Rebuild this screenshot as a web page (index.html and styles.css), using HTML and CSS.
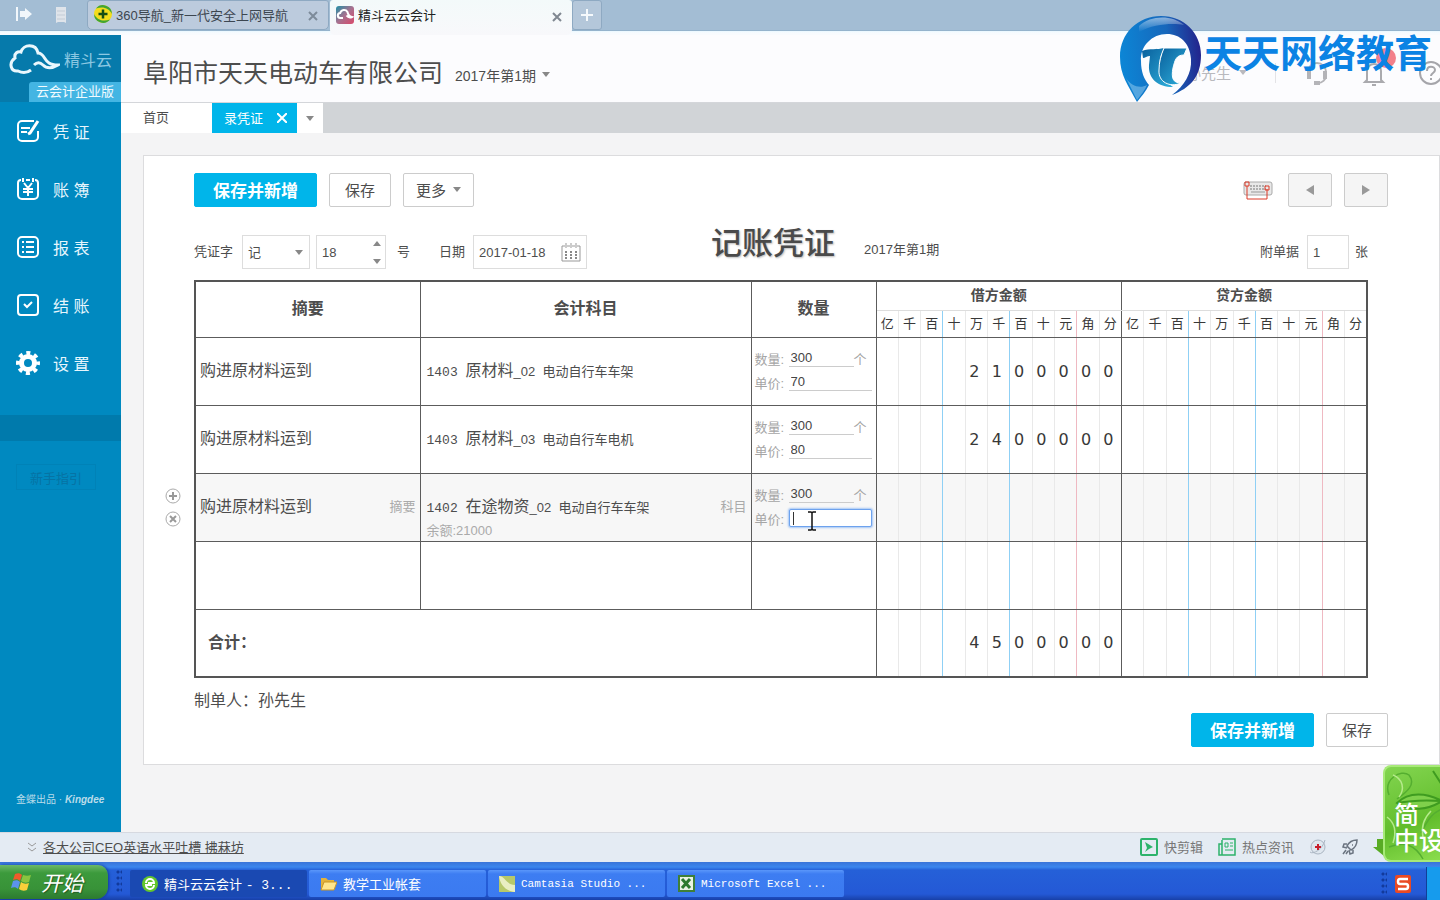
FILE: index.html
```html
<!DOCTYPE html>
<html lang="zh-CN">
<head>
<meta charset="utf-8">
<title>精斗云云会计</title>
<link rel="stylesheet" href="styles.css">
</head>
<body>
<div class="screen">

  <nav class="browser-tabs">
    <div class="browser-tools">
      <svg width="16" height="14" viewBox="0 0 16 14"><path d="M1 0v14" stroke="#f2f7fb" stroke-width="2"/><path d="M4 4h5V1l7 6-7 6v-3H4z" fill="#f2f7fb"/></svg>
      <svg width="10" height="16" viewBox="0 0 10 16"><path d="M0 0h10v16l-2-1H2l-2 1z" fill="#dfe4ea"/><path d="M1 4h8M1 8h8M1 12h8" stroke="#c3ccd6"/></svg>
    </div>
    <div class="browser-tab">
      <svg width="18" height="18" viewBox="0 0 18 18"><circle cx="9" cy="9" r="9" fill="#f4dc1c"/><path d="M2 3.500A9 9 0 0 1 18 9c-3-6-9-8-16-5.500zM0 9c3 6 9 8 16 5.500A9 9 0 0 1 0 9z" fill="#3fa535"/><path d="M9 4.500v9M4.500 9h9" stroke="#174d14" stroke-width="2.500"/></svg>
      <span class="grow">360导航_新一代安全上网导航</span>
      <svg width="10" height="10" viewBox="0 0 10 10"><path d="M1 1l8 8M9 1l-8 8" stroke="#7d8b9a" stroke-width="2"/></svg>
    </div>
    <div class="browser-tab current">
      <svg width="18" height="18" viewBox="0 0 18 18"><defs><linearGradient id="fav" x1="0" y1="0" x2="1" y2="1"><stop offset="0" stop-color="#1f90a6"/><stop offset=".5" stop-color="#a8718f"/><stop offset="1" stop-color="#d9486a"/></linearGradient></defs><rect width="18" height="18" rx="3" fill="url(#fav)"/><path d="M7 12H4.500a2.500 2.500 0 0 1-.3-5A4 4 0 0 1 11.500 6c.5 3 2 4.500 4.500 5-2 1-4 .5-5.500-1.500" fill="none" stroke="#fff" stroke-width="2"/></svg>
      <span class="grow">精斗云云会计</span>
      <svg width="10" height="10" viewBox="0 0 10 10"><path d="M1 1l8 8M9 1l-8 8" stroke="#808891" stroke-width="2"/></svg>
    </div>
    <button class="new-tab" aria-label="新标签"><svg width="12" height="12" viewBox="0 0 12 12"><path d="M6 0v12M0 6h12" stroke="#f5f9fc" stroke-width="2"/></svg></button>
  </nav>

  <div class="app">
    <aside class="sidebar">
      <div class="brand">
        <div class="brand-line">
          <svg width="52" height="32" viewBox="0 0 52 32"><path d="M23 27c-4 3-9 3-13 1-7 1-10-8-3-13-1-5 3-7 6-6 2-8 15-9 17 1 6 0 6 7 11 10 3 2 6 2 9 2-5 3-11 4-15 0-3-3-6-3-9 0" fill="none" stroke="#e9f7fd" stroke-width="3"/></svg>
          <span>精斗云</span>
        </div>
        <span class="edition">云会计企业版</span>
      </div>
      <ul class="menu">
        <li><a href="#"><svg width="24" height="24" viewBox="0 0 24 24"><path d="M18 2H6a4 4 0 0 0-4 4v12a4 4 0 0 0 4 4h12a4 4 0 0 0 4-4v-6M5 9h9M5 13h6" /><path d="M22 2l-8 12-2 1" stroke-width="3"/></svg>凭 证</a></li>
        <li><a href="#"><svg width="24" height="24" viewBox="0 0 24 24"><path d="M5 3a3 3 0 0 0-3 3v12a4 4 0 0 0 4 4h12a4 4 0 0 0 4-4V6a3 3 0 0 0-3-3M10 3h4M7 1v4M17 1v4M8 6l4 5 4-5M12 11v8M7 12h10M7 15h10"/></svg>账 簿</a></li>
        <li><a href="#"><svg width="24" height="24" viewBox="0 0 24 24"><rect x="2" y="2" width="20" height="20" rx="4"/><path d="M6 7h2M10 7h8M6 12h2M10 12h8M6 17h2M10 17h8"/></svg>报 表</a></li>
        <li><a href="#"><svg width="24" height="24" viewBox="0 0 24 24"><rect x="2" y="2" width="20" height="20" rx="3"/><path d="M8 11l3 3 5-5"/></svg>结 账</a></li>
        <li><a href="#"><svg width="24" height="24" viewBox="0 0 24 24"><circle cx="12" cy="12" r="6.500" stroke-width="5"/><circle cx="12" cy="12" r="10" stroke-width="4" stroke-dasharray="4 3.854" stroke-dashoffset="2"/><circle cx="12" cy="12" r="2" fill="#0089c0" stroke="none"/></svg>设 置</a></li>
      </ul>
      <div class="band"></div>
      <button class="guide">新手指引</button>
      <p class="maker">金蝶出品 · <em>Kingdee</em></p>
    </aside>

    <div class="page">
      <header class="company">
        <h1>阜阳市天天电动车有限公司</h1>
        <button class="period">2017年第1期 <i class="caret"></i></button>
        <div class="account">
          <span>孙先生</span><i class="caret pale"></i><i class="rule"></i>
          <svg width="26" height="26" viewBox="0 0 26 26"><path d="M4 15V12a9 9 0 0 1 18 0v3c0 5-4 8-8 8" fill="none" stroke="#b4b4b8" stroke-width="2"/><path d="M3 11h4v8H3zM19 11h4v8h-4zM10 21h6v4h-6z" fill="#b4b4b8"/></svg>
          <svg width="24" height="26" viewBox="0 0 24 26"><path d="M5 20V11a7 7 0 0 1 14 0v9l2 2H3zM10 25h4" fill="none" stroke="#aaaaae" stroke-width="2"/></svg>
          <svg width="22" height="26" viewBox="0 0 22 26"><circle cx="13" cy="13" r="11" fill="none" stroke="#a5a5aa" stroke-width="2"/><path d="M9 11c0-6 8-5 8-1 0 3-4 3-4 6M13 18v2" fill="none" stroke="#a5a5aa" stroke-width="2"/></svg>
        </div>
      </header>

      <nav class="work-tabs">
        <a href="#" class="home">首页</a>
        <a href="#" class="open">录凭证 <svg width="10" height="10" viewBox="0 0 10 10"><path d="M0 0l10 10M10 0L0 10" stroke="#fff" stroke-width="2"/></svg></a>
        <button class="more-tabs" aria-label="更多标签"><i class="caret"></i></button>
      </nav>

      <main class="card">
        <div class="toolbar">
          <button class="btn primary">保存并新增</button>
          <button class="btn">保存</button>
          <button class="btn">更多 <i class="caret"></i></button>
          <div class="pager">
            <svg width="30" height="20" viewBox="0 0 30 20"><rect x="1" y="2" width="28" height="13" rx="2" fill="#e8e8e8" stroke="#aaa"/><path d="M7 6h16M7 9h16" stroke="#777" stroke-dasharray="2 1"/><path d="M8 12h14" stroke="#999"/><path d="M4 6v13h20V9M2 2h4v4H2zM22 6h4v4h-4z" fill="none" stroke="#dc3b28"/></svg>
            <button class="btn turn" aria-label="上一张"><i class="arrow left"></i></button>
            <button class="btn turn" aria-label="下一张"><i class="arrow right"></i></button>
          </div>
        </div>

        <section class="voucher">
          <div class="voucher-head">
            <label for="word">凭证字</label>
            <span class="field word"><select id="word"><option>记</option></select><i class="caret"></i></span>
            <span class="field number"><input id="num" type="text" value="18"><span class="spin"><i class="caret up"></i><i class="caret"></i></span></span>
            <label for="num" class="unit">号</label>
            <label for="date">日期</label>
            <span class="field date"><input id="date" type="text" value="2017-01-18"><svg width="20" height="20" viewBox="0 0 20 20"><path d="M1 4v15h18V4M1 4h3M6 4h3M11 4h3M16 4h3M5 1v5M10 1v5M15 1v5" fill="none" stroke="#999"/><path d="M4 10h12M4 13h12M4 16h12" stroke="#888" stroke-width="2" stroke-dasharray="2 3"/></svg></span>
            <h2>记账凭证</h2>
            <span class="voucher-period">2017年第1期</span>
            <label for="att" class="attach">附单据</label>
            <span class="field count"><input id="att" type="text" value="1"></span>
            <label for="att">张</label>
          </div>

          <table class="ledger">
            <colgroup><col class="c-note"><col class="c-subject"><col class="c-qty"><col span="22"></colgroup>
            <thead>
              <tr class="titles"><th rowspan="2">摘要</th><th rowspan="2">会计科目</th><th rowspan="2">数量</th><th colspan="11" class="side">借方金额</th><th colspan="11" class="side">贷方金额</th></tr>
              <tr class="digits units"><th>亿</th><th>千</th><th>百</th><th>十</th><th>万</th><th>千</th><th>百</th><th>十</th><th>元</th><th>角</th><th>分</th><th>亿</th><th>千</th><th>百</th><th>十</th><th>万</th><th>千</th><th>百</th><th>十</th><th>元</th><th>角</th><th>分</th></tr>
            </thead>
            <tbody>
              <tr class="digits">
                <td class="note">购进原材料运到</td>
                <td class="subject"><code>1403 </code><b>原材料</b>_02&nbsp; 电动自行车车架</td>
                <td class="qty"><div><label for="q1">数量:</label><input id="q1" class="short" value="300"><span>个</span></div><div><label for="p1">单价:</label><input id="p1" value="70"></div></td>
                <td></td><td></td><td></td><td></td><td>2</td><td>1</td><td>0</td><td>0</td><td>0</td><td>0</td><td>0</td>
                <td></td><td></td><td></td><td></td><td></td><td></td><td></td><td></td><td></td><td></td><td></td>
              </tr>
              <tr class="digits">
                <td class="note">购进原材料运到</td>
                <td class="subject"><code>1403 </code><b>原材料</b>_03&nbsp; 电动自行车电机</td>
                <td class="qty"><div><label for="q2">数量:</label><input id="q2" class="short" value="300"><span>个</span></div><div><label for="p2">单价:</label><input id="p2" value="80"></div></td>
                <td></td><td></td><td></td><td></td><td>2</td><td>4</td><td>0</td><td>0</td><td>0</td><td>0</td><td>0</td>
                <td></td><td></td><td></td><td></td><td></td><td></td><td></td><td></td><td></td><td></td><td></td>
              </tr>
              <tr class="digits active">
                <td class="note">
                  <div class="row-tools">
                    <button aria-label="增加分录"><svg width="16" height="16" viewBox="0 0 16 16"><circle cx="8" cy="8" r="7" fill="none" stroke="#aaa"/><path d="M8 4v8M4 8h8" stroke="#999" stroke-width="2"/></svg></button>
                    <button aria-label="删除分录"><svg width="16" height="16" viewBox="0 0 16 16"><circle cx="8" cy="8" r="7" fill="none" stroke="#aaa"/><path d="M5 5l6 6M11 5l-6 6" stroke="#999" stroke-width="2"/></svg></button>
                  </div>
                  <div class="pick"><span>购进原材料运到</span><a href="#">摘要</a></div>
                </td>
                <td class="subject"><div class="pick"><span><code>1402 </code><b>在途物资</b>_02&nbsp; 电动自行车车架</span><a href="#">科目</a></div><small>余额:21000</small></td>
                <td class="qty"><div><label for="q3">数量:</label><input id="q3" class="short" value="300"><span>个</span></div><div class="editing"><label for="p3">单价:</label><input id="p3" class="focused" value=""><i class="text-caret"></i><svg class="pointer" width="10" height="20" viewBox="0 0 10 20"><path d="M1 1h3l1 1 1-1h3M5 2v16M1 19h3l1-1 1 1h3" fill="none" stroke="#111" stroke-width="1.500"/></svg></div></td>
                <td></td><td></td><td></td><td></td><td></td><td></td><td></td><td></td><td></td><td></td><td></td>
                <td></td><td></td><td></td><td></td><td></td><td></td><td></td><td></td><td></td><td></td><td></td>
              </tr>
              <tr class="digits">
                <td></td><td></td><td></td>
                <td></td><td></td><td></td><td></td><td></td><td></td><td></td><td></td><td></td><td></td><td></td>
                <td></td><td></td><td></td><td></td><td></td><td></td><td></td><td></td><td></td><td></td><td></td>
              </tr>
            </tbody>
            <tfoot>
              <tr class="digits">
                <th colspan="3">合计：</th>
                <td></td><td></td><td></td><td></td><td>4</td><td>5</td><td>0</td><td>0</td><td>0</td><td>0</td><td>0</td>
                <td></td><td></td><td></td><td></td><td></td><td></td><td></td><td></td><td></td><td></td><td></td>
              </tr>
            </tfoot>
          </table>
          <p class="author">制单人：孙先生</p>
        </section>

        <div class="bottom-actions">
          <button class="btn primary">保存并新增</button>
          <button class="btn">保存</button>
        </div>
      </main>
    </div>
  </div>

  <footer class="status">
    <svg width="8" height="10" viewBox="0 0 8 10"><path d="M0 1l4 3 4-3M0 6l4 3 4-3" fill="none" stroke="#999"/></svg>
    <a href="#">各大公司CEO英语水平吐槽 拂菻坊</a>
    <div class="status-tools">
      <span><svg width="18" height="18" viewBox="0 0 18 18"><rect x="1" y="1" width="16" height="16" rx="1" fill="none" stroke="#2db36b" stroke-width="2"/><path d="M5 4l8 5-4 2-4 3 2-4z" fill="#2db36b"/></svg>快剪辑</span>
      <span><svg width="18" height="18" viewBox="0 0 18 18"><path d="M4 1h13v16H1V6h3M4 2v15" fill="none" stroke="#2db36b" stroke-width="1.500"/><path d="M7 5h3v4H7zM12 5h3M12 8h3M7 12h8" fill="none" stroke="#2db36b"/></svg>热点资讯</span>
      <svg width="18" height="18" viewBox="0 0 18 18"><circle cx="9" cy="9" r="7" fill="#dfe7ef" stroke="#aab5c2"/><path d="M1 14c3 3 13-3 15-12" fill="none" stroke="#aab5c2"/><path d="M9 6v6M6 9h6" stroke="#c81f2c" stroke-width="2"/></svg>
      <svg width="16" height="16" viewBox="0 0 16 16"><path d="M15 1c-5 0-8 2-10 6l4 4c4-2 6-5 6-10zM5 5H2L1 8l4 1M11 11v3l-3 1-1-4M4 11l-3 4M10 6h1M6 12l-2 3" fill="none" stroke="#6b7480" stroke-width="1.500"/></svg>
      <svg width="11" height="18" viewBox="0 0 11 18"><path d="M4 1h7v17L0 9h4z" fill="#58ab24"/></svg>
    </div>
  </footer>

  <footer class="taskbar">
    <button class="start">
      <svg width="22" height="20" viewBox="0 0 22 20"><path d="M4 2c3-1 5-1 7 1L9 9c-2-2-4-2-7-1z" fill="#ef5a2b"/><path d="M12 3c3 1 5 1 8 0l-2 7c-3 1-5 1-8-1z" fill="#8ac43f"/><path d="M2 9c3-1 5-1 7 1l-2 7c-2-2-4-2-7-1z" fill="#5c93ec"/><path d="M10 10c3 2 5 2 8 1l-2 7c-3 1-5 1-8-1z" fill="#f9cf3a"/></svg>
      开始
    </button>
    <i class="grip"></i>
    <div class="tasks">
      <button class="task pressed"><svg width="16" height="16" viewBox="0 0 16 16"><circle cx="8" cy="8" r="8" fill="#63c62c"/><path d="M4 7a4 4 0 0 1 8 0H6M12 9a4 4 0 0 1-8 0h6" fill="none" stroke="#fff" stroke-width="2"/></svg><span>精斗云云会计 <code>- 3...</code></span></button>
      <button class="task"><svg width="17" height="14" viewBox="0 0 17 14"><path d="M1 1h5l2 2h6v10H1z" fill="#e3b23b"/><path d="M4 5h13l-3 8H1z" fill="#ffe58d" stroke="#c99527"/></svg>教学工业帐套</button>
      <button class="task latin"><svg width="16" height="16" viewBox="0 0 16 16"><rect width="16" height="16" fill="#b7c86a"/><path d="M0 0c6 0 6 8 16 9v7C6 15 1 8 0 0z" fill="#e9eec2"/></svg>Camtasia Studio ...</button>
      <button class="task latin"><svg width="17" height="17" viewBox="0 0 17 17"><rect x="1" y="1" width="15" height="15" fill="#e9f3e4" stroke="#3f7f38" stroke-width="2"/><path d="M4 4l8 9M12 4l-8 9" stroke="#2c7a2e" stroke-width="3"/></svg>Microsoft Excel ...</button>
    </div>
    <div class="tray">
      <i class="grip"></i>
      <svg width="16" height="18" viewBox="0 0 16 18"><rect width="16" height="18" rx="2" fill="#ea4a24"/><path d="M13 4H5Q3 4 3 6.500T5 9h6q2 0 2 2.500T11 14H3" fill="none" stroke="#fff" stroke-width="2.500"/></svg>
      <i class="notify"></i>
    </div>
  </footer>

  <div class="watermark">
    <svg width="82" height="88" viewBox="0 0 82 88"><defs><linearGradient id="ring" x1="0" y1=".5" x2="1" y2=".4"><stop offset="0" stop-color="#0c86d6"/><stop offset=".6" stop-color="#1767bb"/><stop offset="1" stop-color="#23238c"/></linearGradient><linearGradient id="shine" x1="0" y1="0" x2="0" y2="1"><stop offset="0" stop-color="#fff" stop-opacity=".5"/><stop offset="1" stop-color="#fff" stop-opacity="0"/></linearGradient><linearGradient id="letter" x1="0" y1="0" x2="1" y2="1"><stop offset="0" stop-color="#095f9c"/><stop offset="1" stop-color="#2fb0dc"/></linearGradient></defs>
      <circle cx="47" cy="44" r="27" fill="#fdfdff"/>
      <path d="M17 87C8 70 0 60 0 42 0 18 18 1 41 1s40 17 40 39-11 33-29 40c12-9 20-21 19-36C70 28 60 19 47 19c-15 0-27 12-26 27 0 11 3 18 8 24-3 6-8 12-12 17z" fill="url(#ring)"/>
      <path d="M19 11C31 0 52 0 64 10 52 8 34 9 19 17z" fill="url(#shine)"/>
      <path d="M6 63c5 8 14 11 21 7-2 5-6 10-10 15z" fill="#a9d8f4" opacity=".45"/>
      <path d="M22 36c8-3 15-1 22-3l-3 7c-3 9-2 22 12 32-15 0-25-8-24-22l1-9c-3 0-5 2-7 2z" fill="url(#letter)"/>
      <path d="M44 33h23l-3 7c-8 0-9 5-11 13-2 10 0 15 8 15-11 5-23-1-22-13 0-8 2-15 5-22z" fill="url(#letter)" stroke="#fff"/></svg>
    <strong>天天网络教育</strong>
    <i class="alert"></i>
  </div>

  <div class="ime">
    <svg width="57" height="96" viewBox="0 0 57 96"><path d="M12 36c12-12 30-10 45-2-14 9-32 11-45 2zM12 36c16-3 30-3 45-2M48 4l9 14" fill="#7fd04b" stroke="#3f9c20" stroke-width="2"/><path d="M4 28C-2 12 16 2 24 8c8 10-4 18-12 24M36 66c8-16 12-20 21-24M4 80c16-6 26-2 34 12" fill="none" stroke="#55ae30" stroke-width="1.500"/><path d="M8 8c10 4 12 14 6 22M46 44c-8 8-10 16-8 26M2 50c8 6 10 14 6 26" fill="none" stroke="#b5ea8a" stroke-width="1.500"/></svg>
    <span>简<br>中设</span>
  </div>
</div>
</body>
</html>
```
FILE: styles.css
```css
* { box-sizing: border-box; }
body {
  margin: 0;
  overflow: hidden;
  font-family: "Liberation Sans", "Noto Sans CJK SC", sans-serif;
  font-size: 13px;
  color: #4d4d4d;
}
h1, h2, p, ul { margin: 0; padding: 0; font-weight: 400; }
ul { list-style: none; }
a { color: inherit; text-decoration: none; }
button, input, select { font: inherit; color: inherit; }
button { padding: 0; border: 0; background: none; }
svg { flex: none; display: block; }
code { font-family: "Liberation Mono", monospace; font-size: 13px; white-space: pre; }

.screen {
  position: relative;
  display: flex;
  flex-direction: column;
  min-height: 100vh;
  overflow: hidden;
}

.caret {
  display: inline-block;
  border: 4px solid transparent;
  border-top: 5px solid #888;
  border-bottom: 0;
}
.caret.up { border-top: 0; border-bottom: 5px solid #888; }
.caret.pale { border-top-color: #b9b9bd; }

/* browser tabs */
.browser-tabs {
  display: flex;
  height: 35px;
  background: linear-gradient(#a3bdd4 30px, #86a9c4 31px, #eaf8ff 31px, #f8fbfe 33px);
}
.browser-tools { display: flex; gap: 24px; width: 87px; padding: 7px 0 0 16px; }
.browser-tab {
  display: flex;
  align-items: center;
  gap: 4px;
  width: 242px;
  height: 30px;
  padding: 0 10px 2px 6px;
  border: 1px solid #8ea9c2;
  border-radius: 3px 3px 5px 5px;
  background: #bccbdd;
  color: #3c4650;
}
.browser-tab.current {
  height: 35px;
  border: 0;
  padding-bottom: 6px;
  margin-left: 1px;
  background: linear-gradient(#f3fafa, #f8f8fb);
  color: #222;
}
.browser-tab svg:last-child { margin-top: 4px; }
.grow { flex: 1; white-space: nowrap; }
.new-tab {
  display: grid;
  place-items: center;
  width: 30px;
  height: 30px;
  border: 1px solid #8ea9c2;
  border-radius: 3px;
  background: #b4c7da;
}

/* application frame */
.app { display: flex; flex: 1; background: #f4f4f5; }
.sidebar {
  display: flex;
  flex-direction: column;
  width: 121px;
  background: #0089c0;
  color: #e6f6fd;
}
.brand {
  display: flex;
  flex-direction: column;
  justify-content: space-between;
  height: 67px;
  background: #067aab;
}
.brand-line { display: flex; align-items: center; gap: 4px; padding: 8px 0 0 8px; color: #8cc8e2; font-size: 16px; white-space: nowrap; }
.edition {
  align-self: flex-end;
  width: 92px;
  height: 20px;
  border-radius: 3px 0 0 0;
  background: #43b5e3;
  color: #f2fbff;
  line-height: 20px;
  text-align: center;
}
.menu a { display: flex; align-items: center; gap: 13px; height: 58px; padding-left: 16px; font-size: 16px; }
.menu svg { fill: none; stroke: #fff; stroke-width: 2; }
.band { height: 26px; margin-top: 23px; background: #007aac; }
.guide {
  width: 80px;
  height: 26px;
  margin: 23px 0 0 16px;
  border: 1px solid #0082b7;
  color: #0673a4;
}
.maker { margin: auto 0 26px 16px; color: #b9dcea; font-size: 10px; white-space: nowrap; }
.maker em { font-weight: 700; }

.page { display: flex; flex-direction: column; flex: 1; min-width: 0; }
.company { display: flex; align-items: center; height: 67px; padding: 8px 0 0 22px; background: #fcfcfe; }
.company h1 { font-size: 25px; line-height: 36px; }
.period { display: flex; align-items: center; gap: 6px; margin: 4px 0 0 12px; font-size: 14px; }
.account { display: flex; align-items: center; margin-left: auto; color: #b9b9bd; font-size: 15px; }
.account .caret { margin-left: 8px; }
.account .rule { height: 20px; margin: 0 28px; border-left: 1px solid #e3e3e6; }
.account svg { margin-right: 32px; }
.account svg:last-child { margin-right: 0; }

.work-tabs { display: flex; height: 31px; border-top: 1px solid #d4d6da; background: #d1d4d7; line-height: 29px; }
.home { width: 91px; padding-left: 22px; background: #fff; }
.open { display: flex; align-items: center; gap: 14px; padding: 0 10px 0 12px; background: #00b5ea; color: #fff; }
.more-tabs { display: grid; place-items: center; width: 26px; background: #fff; }

/* voucher card */
.card {
  margin: 22px 0 0 22px;
  padding: 17px 51px 17px 50px;
  border: 1px solid #dcdcde;
  background: #fff;
}
.toolbar, .bottom-actions { display: flex; gap: 12px; }
.btn {
  display: flex;
  align-items: center;
  justify-content: center;
  gap: 7px;
  min-width: 62px;
  height: 34px;
  padding: 0 12px 2px;
  border: 1px solid #ccc;
  border-radius: 2px;
  background: #fff;
  font-size: 15px;
}
.btn.primary { padding: 0 18px 2px; border-color: #00b5ea; background: #00b5ea; color: #fff; font-size: 17px; font-weight: 700; }
.pager { display: flex; align-items: center; gap: 12px; margin-left: auto; }
.pager svg { margin-right: 3px; }
.btn.turn { width: 44px; min-width: 44px; padding: 0; background: #f5f5f5; }
.arrow { border: 5px solid transparent; }
.arrow.left { border-right: 8px solid #999; border-left: 0; }
.arrow.right { border-left: 8px solid #999; border-right: 0; }

.voucher { margin-right: 20px; }
.voucher-head { display: flex; align-items: center; height: 34px; margin: 28px 0 11px; white-space: nowrap; }
.voucher-head label { padding-bottom: 4px; }
.field { position: relative; display: flex; align-items: center; height: 34px; border: 1px solid #ddd; background: #fff; }
.field input, .field select { width: 100%; height: 100%; padding: 0 5px; border: 0; background: none; outline: 0; appearance: none; }
.field .caret { flex: none; }
.word { width: 68px; margin: 0 6px 0 9px; padding-right: 6px; }
.number { width: 70px; padding-right: 4px; }
.spin { display: flex; flex-direction: column; gap: 13px; }
.unit { margin: 0 29px 0 11px; }
.date { width: 114px; margin-left: 8px; padding-right: 5px; }
.date input { padding-right: 0; }
.voucher-head h2 { margin: 0 29px 16px 124px; color: #4a4a4a; font-size: 31px; font-weight: 500; line-height: 34px; text-shadow: 1px 1px 2px #bbb; }
.voucher-period { padding-bottom: 8px; }
.attach { margin: 0 8px 0 auto; }
.count { width: 42px; margin-right: 6px; }

.ledger { width: 100%; table-layout: fixed; border-collapse: collapse; border: 2px solid #555; }
.c-note { width: 225px; }
.c-subject { width: 331px; }
.c-qty { width: 125px; }
.ledger th, .ledger td { padding: 0; border: 1px solid #5c5c5c; }
.ledger th { padding-bottom: 4px; font-size: 16px; }
.titles { height: 29px; }
.ledger .side { border-bottom-color: #ddd; font-size: 14px; }
.digits { height: 68px; }
.digits.units { height: 27px; }

/* amount grid: every rule is drawn by the right edge of its column */
.ledger .digits > :nth-last-child(-n+22) {
  padding-right: 4px;
  border-left: 0;
  border-right-color: #e9e9e9;
  color: #383838;
  font-family: "DejaVu Sans", sans-serif;
  font-size: 16px;
  text-align: center;
}
.ledger .digits.units > th:nth-last-child(-n+22) {
  padding: 0 0 2px;
  border-top-color: #ddd;
  font-family: "Noto Sans CJK SC", sans-serif;
  font-size: 13px;
  font-weight: 400;
  line-height: 20px;
}
.ledger tr.digits > :nth-last-child(9), .ledger tr.digits > :nth-last-child(20),
.ledger tr.digits > :nth-last-child(6), .ledger tr.digits > :nth-last-child(17) { border-right-color: #8fd0f5; }
.ledger tr.digits > :nth-last-child(3), .ledger tr.digits > :nth-last-child(14) { border-right-color: #efb9c2; }
.ledger tr.digits > :nth-last-child(12) { border-right-color: #5c5c5c; }
.ledger tr.digits > :nth-last-child(1) { border-right: 2px solid #555; }

.active { background: #f7f7f7; }
.ledger .note { position: relative; padding: 0 4px 4px; font-size: 16px; }
.ledger .subject { position: relative; padding: 0 4px 4px 6px; white-space: nowrap; }
.subject b { font-size: 16px; font-weight: 400; }
.subject small { position: absolute; left: 6px; bottom: 2px; color: #aaa; font-size: 13px; }
.pick { display: flex; align-items: center; justify-content: space-between; }
.pick a { color: #aaa; font-size: 13px; }
.row-tools { position: absolute; left: -31px; top: 14px; display: grid; gap: 7px; }
.ledger .qty { padding: 0 3px 2px; color: #a5a5a5; }
.qty div { position: relative; display: flex; align-items: center; height: 24px; }
.qty label { width: 34px; white-space: nowrap; }
.qty input { width: 83px; height: 18px; padding: 0 2px; border: 0; border-bottom: 1px solid #ccc; background: none; color: #444; outline: 0; }
.qty input.short { width: 65px; }
.qty input.focused { border: 1px solid #6da2ee; border-radius: 2px; background: #fff; box-shadow: 0 0 2px 1px #a5c6f5; }
.text-caret { position: absolute; left: 38px; top: 6px; height: 13px; border-left: 1px solid #333; }
.pointer { position: absolute; left: 52px; top: 5px; }
.ledger tfoot th { padding-left: 12px; text-align: left; }
.author { margin-top: 11px; font-size: 16px; line-height: 24px; }
.bottom-actions { justify-content: flex-end; }

/* browser status bar */
.status {
  display: flex;
  align-items: center;
  height: 30px;
  padding: 0 0 2px 28px;
  border-top: 1px solid #d6d9e0;
  background: #e4ebf3;
}
.status > a { margin-left: 7px; text-decoration: underline; }
.status-tools { display: flex; align-items: center; gap: 15px; margin: 0 56px 0 auto; color: #777; white-space: nowrap; }
.status-tools span { display: flex; align-items: center; gap: 6px; }

/* desktop taskbar */
.taskbar {
  display: flex;
  height: 38px;
  background: linear-gradient(#3a74d8, #3b86ee 5px, #2560d8 8px, #2459d6 32px, #1840a8);
  color: #fff;
}
.start {
  display: flex;
  align-items: center;
  gap: 8px;
  width: 108px;
  height: 34px;
  margin-top: 3px;
  padding-left: 11px;
  border-radius: 0 10px 12px 0;
  background: linear-gradient(#6cb868, #3c9a3c 8px, #389238 24px, #2c7a30);
  box-shadow: 1px 0 3px #123c9a;
  font-size: 21px;
  font-style: italic;
  text-shadow: 1px 1px 1px #235a24;
}
.grip { width: 6px; height: 24px; margin: 8px 8px 0; background: radial-gradient(circle at 2px 2px, #123a9c 1px, transparent 2px) 0 0 / 4px 6px; }
.tasks { display: flex; gap: 2px; margin-top: 8px; }
.task {
  display: flex;
  align-items: center;
  gap: 6px;
  width: 177px;
  height: 27px;
  padding-left: 11px;
  border-radius: 2px;
  background: linear-gradient(#5a97fa, #3d7df2 4px, #3b7af0);
  white-space: nowrap;
}
.task.pressed { padding-left: 12px; background: #1a49b2; }
.task.latin { font-family: "Liberation Mono", monospace; font-size: 11px; }
.tray { display: flex; align-items: center; margin-left: auto; }
.tray svg { margin-top: 6px; }
.tray .grip { margin-top: 6px; }
.notify { width: 14px; height: 33px; margin: 5px 0 0 15px; border-left: 1px solid #113f98; background: #169bed; }

/* overlays */
.watermark { position: absolute; z-index: 1; top: 15px; right: 8px; display: flex; }
.watermark strong { margin-left: 2px; color: #0b83e4; font-family: "Noto Sans CJK SC", sans-serif; font-size: 38px; line-height: 72px; white-space: nowrap; }
.alert { position: absolute; z-index: -1; top: 33px; right: 36px; width: 20px; height: 20px; border-radius: 50%; background: #f04b59; opacity: .7; }
.ime {
  position: absolute;
  z-index: 1;
  right: 0;
  bottom: 38px;
  width: 57px;
  height: 97px;
  overflow: hidden;
  border: 2px solid #a7ea78;
  border-right: 0;
  border-radius: 8px 0 0 8px;
  background: linear-gradient(160deg, #83d550, #62bd2c 60%, #8bdd4e);
}
.ime span { position: absolute; left: 9px; top: 35px; color: #fff; font-size: 25px; font-weight: 500; line-height: 26px; white-space: nowrap; }
```
